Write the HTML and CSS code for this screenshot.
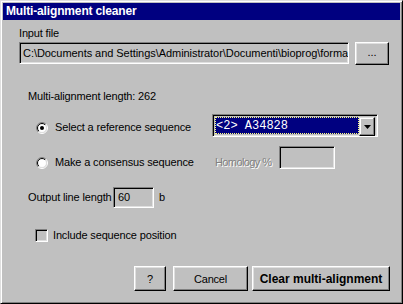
FILE: index.html
```
<!DOCTYPE html>
<html>
<head>
<meta charset="utf-8">
<link rel="stylesheet" href="styles.css">
</head>
<body>
<div class="window">
  <div class="titlebar">Multi-alignment cleaner</div>
  <div class="content">
    <div class="text lbl-input">Input file</div>
    <div class="row input-row">
      <div class="field path"><span class="path-text">C:\Documents and Settings\Administrator\Documenti\bioprog\forma</span></div>
      <div class="btn browse">...</div>
    </div>
    <div class="text lbl-length">Multi-alignment length: 262</div>
    <div class="row opt-row r1">
      <div class="option opt1">
        <svg class="radio" width="12" height="12" viewBox="0 0 12 12">
          <defs>
            <linearGradient id="rg-out" x1="0" y1="0" x2="1" y2="1">
              <stop offset="0.5" stop-color="#808080"/>
              <stop offset="0.5" stop-color="#ffffff"/>
            </linearGradient>
            <linearGradient id="rg-in" x1="0" y1="0" x2="1" y2="1">
              <stop offset="0.5" stop-color="#000000"/>
              <stop offset="0.5" stop-color="#dfdfdf"/>
            </linearGradient>
          </defs>
          <circle cx="6" cy="6" r="5.5" fill="none" stroke="url(#rg-out)"/>
          <circle cx="6" cy="6" r="4.5" fill="#ffffff" stroke="url(#rg-in)"/>
          <circle cx="6" cy="6" r="2" fill="#000000"/>
        </svg>
        <span class="text">Select a reference sequence</span>
      </div>
      <div class="combo">
        <div class="combo-value">&lt;2&gt; A34828</div>
        <div class="combo-btn">
          <svg width="7" height="4" viewBox="0 0 7 4"><polygon points="0,0 7,0 3.5,4" fill="#000"/></svg>
        </div>
      </div>
    </div>
    <div class="row opt-row r2">
      <div class="option opt2">
        <svg class="radio" width="12" height="12" viewBox="0 0 12 12">
          <circle cx="6" cy="6" r="5.5" fill="none" stroke="url(#rg-out)"/>
          <circle cx="6" cy="6" r="4.5" fill="#ffffff" stroke="url(#rg-in)"/>
        </svg>
        <span class="text">Make a consensus sequence</span>
      </div>
      <div class="text disabled homology">Homology %</div>
      <div class="field homology-box"></div>
    </div>
    <div class="row output-row">
      <div class="text out-label">Output line length</div>
      <div class="field out-box text">60</div>
      <div class="text unit">b</div>
    </div>
    <div class="row check-row">
      <div class="checkbox"></div>
      <span class="text">Include sequence position</span>
    </div>
    <div class="row btn-row">
      <div class="btn help">?</div>
      <div class="btn cancel">Cancel</div>
      <div class="btn clear">Clear multi-alignment</div>
    </div>
  </div>
</div>
</body>
</html>
```
FILE: styles.css
```
html, body {
  margin: 0;
  padding: 0;
  background: #c0c0c0;
}
body {
  font-family: "Liberation Sans", Arial, sans-serif;
  font-size: 11px;
  color: #000;
}
.window {
  width: 403px;
  height: 304px;
  box-sizing: border-box;
  border: 1px solid;
  border-color: #dfdfdf #000 #000 #dfdfdf;
  box-shadow: inset 1px 1px #fff, inset -1px -1px #808080;
  padding: 2px;
  background: #c0c0c0;
  display: flex;
  flex-direction: column;
}
.titlebar {
  height: 17px;
  flex: none;
  background: #000080;
  color: #fff;
  font-weight: bold;
  font-size: 12px;
  line-height: 17px;
  padding-left: 3px;
  letter-spacing: -0.15px;
}
.content {
  display: flex;
  flex-direction: column;
  padding: 0 10px 0 16px;
}
.text {
  line-height: 13px;
  letter-spacing: -0.15px;
  white-space: nowrap;
}
.row {
  display: flex;
  flex: none;
}
.field {
  box-sizing: border-box;
  border: 1px solid;
  border-color: #808080 #fff #fff #808080;
  box-shadow: inset 1px 1px #000, inset -1px -1px #dfdfdf;
  background: #c0c0c0;
}
.btn {
  box-sizing: border-box;
  border: 1px solid;
  border-color: #fff #000 #000 #fff;
  box-shadow: inset -1px -1px #808080, inset 1px 1px #dfdfdf;
  background: #c0c0c0;
  display: flex;
  align-items: center;
  justify-content: center;
  white-space: nowrap;
}
.lbl-input {
  margin-top: 7px;
}
.input-row {
  margin-top: 2px;
  height: 23px;
  align-items: flex-start;
}
.path {
  width: 330px;
  height: 22px;
  padding: 4px 0 0 3px;
  overflow: hidden;
  line-height: 13px;
  white-space: nowrap;
}
.path-text {
  letter-spacing: -0.05px;
}
.browse {
  margin-left: 6px;
  width: 34px;
  height: 23px;
  padding-bottom: 3px;
}
.lbl-length {
  margin-top: 25px;
  margin-left: 9px;
}
.opt-row {
  height: 23px;
  margin-left: 17px;
  align-items: flex-start;
}
.r1 {
  margin-top: 11px;
}
.r2 {
  margin-top: 9px;
}
.option {
  display: flex;
  align-items: center;
  height: 13px;
}
.opt1 {
  width: 176px;
  margin-top: 7px;
}
.opt2 {
  width: 179px;
  margin-top: 10px;
}
.radio {
  flex: none;
  margin-right: 7px;
}
.combo {
  width: 166px;
  height: 23px;
  box-sizing: border-box;
  border: 1px solid;
  border-color: #808080 #fff #fff #808080;
  box-shadow: inset 1px 1px #000, inset -1px -1px #dfdfdf;
  padding: 2px;
  display: flex;
}
.combo-value {
  flex: 1;
  background: #000080;
  color: #fff;
  font-family: "Liberation Mono", "Courier New", monospace;
  font-size: 12px;
  line-height: 19px;
  padding-left: 1px;
  outline: 1px dotted #ffff80;
  outline-offset: -1px;
}
.combo-btn {
  width: 16px;
  height: 19px;
  box-sizing: border-box;
  border: 1px solid;
  border-color: #dfdfdf #000 #000 #dfdfdf;
  box-shadow: inset -1px -1px #808080, inset 1px 1px #fff;
  background: #c0c0c0;
  display: flex;
  align-items: center;
  justify-content: center;
}
.homology {
  width: 64px;
  margin-top: 10px;
  letter-spacing: -0.6px;
}
.disabled {
  color: #808080;
  text-shadow: 1px 1px 0 #fff;
}
.homology-box {
  width: 56px;
  height: 23px;
}
.output-row {
  margin-top: 18px;
  margin-left: 9px;
  height: 21px;
  align-items: center;
}
.out-label {
  width: 85px;
}
.out-box {
  width: 41px;
  height: 21px;
  padding: 3px 0 0 4px;
}
.unit {
  margin-left: 5px;
}
.check-row {
  margin-top: 21px;
  margin-left: 16px;
  height: 13px;
  align-items: center;
}
.checkbox {
  width: 13px;
  height: 13px;
  box-sizing: border-box;
  border: 1px solid;
  border-color: #808080 #fff #fff #808080;
  box-shadow: inset 1px 1px #000, inset -1px -1px #dfdfdf;
  background: #c0c0c0;
  margin-right: 5px;
}
.btn-row {
  margin-top: 24px;
  height: 25px;
  justify-content: flex-end;
}
.btn-row .btn {
  height: 25px;
  font-size: 11px;
  letter-spacing: -0.2px;
}
.help {
  width: 32px;
}
.cancel {
  width: 75px;
  margin-left: 7px;
}
.clear {
  width: 138px;
  margin-left: 4px;
  font-weight: bold;
}
.btn-row .clear {
  font-size: 12px;
  letter-spacing: 0;
}
```
